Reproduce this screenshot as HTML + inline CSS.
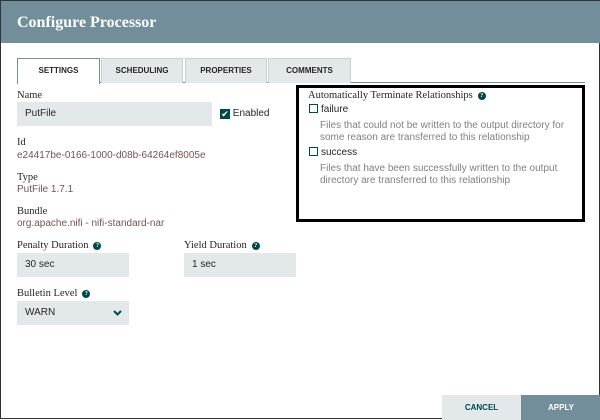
<!DOCTYPE html>
<html><head><style>
*{margin:0;padding:0;box-sizing:border-box}
body{width:600px;height:419px;background:#fff;font-family:"Liberation Sans",sans-serif;position:relative;overflow:hidden;border:1px solid #333}
.a{position:absolute}
.hdr{left:0;top:0;width:600px;height:42px;background:#728e9b;color:#fff;font-family:"Liberation Serif",serif;font-weight:bold;font-size:16px;padding:13px 0 0 16px}
.tab{top:57px;height:25px;background:#e3e8eb;border:1px solid #c7d2d7;border-bottom:none;font-size:8px;font-weight:bold;color:#262626;text-align:center;line-height:24px}
.lbl{font-family:"Liberation Serif",serif;font-size:10.5px;color:#262626}
.val{font-size:10px;color:#775351}
.inp{background:#e3e8eb;font-size:10px;color:#262626;padding-left:8px;line-height:24px;height:24px}
.q{display:inline-block;width:8px;height:8px;border-radius:50%;background:#004849;color:#fff;font-size:6px;line-height:8px;text-align:center;font-weight:bold;vertical-align:middle;margin-left:5px}
.cb{display:inline-block;width:9px;height:9px;border:1.5px solid #004849;vertical-align:-1px;margin-right:3px}
.desc{font-size:10px;color:#808080;line-height:12px}
</style></head><body>
<div class="a hdr">Configure Processor</div>
<div class="a" style="left:16px;top:81px;width:568px;height:1px;background:#728e9b"></div>
<div class="a tab" style="left:16px;width:83px;background:#fff;height:26px;border-color:#728e9b">SETTINGS</div>
<div class="a tab" style="left:100px;width:82px">SCHEDULING</div>
<div class="a tab" style="left:184px;width:82px">PROPERTIES</div>
<div class="a tab" style="left:267px;width:83px">COMMENTS</div>

<div class="a lbl" style="left:16px;top:89px">Name</div>
<div class="a inp" style="left:16px;top:101px;width:195px">PutFile</div>
<div class="a" style="left:219px;top:107px;font-size:10px;color:#262626"><span style="display:inline-block;width:10px;height:10px;background:#004849;color:#fff;font-size:9px;line-height:10px;text-align:center;vertical-align:-1px">✔</span> Enabled</div>
<div class="a lbl" style="left:16px;top:136px">Id</div>
<div class="a val" style="left:16px;top:149px">e24417be-0166-1000-d08b-64264ef8005e</div>
<div class="a lbl" style="left:16px;top:171px">Type</div>
<div class="a val" style="left:16px;top:183px">PutFile 1.7.1</div>
<div class="a lbl" style="left:16px;top:205px">Bundle</div>
<div class="a val" style="left:16px;top:217px">org.apache.nifi - nifi-standard-nar</div>
<div class="a lbl" style="left:16px;top:239px">Penalty Duration<span class="q">?</span></div>
<div class="a inp" style="left:16px;top:252px;width:112px">30 sec</div>
<div class="a lbl" style="left:183px;top:239px">Yield Duration<span class="q">?</span></div>
<div class="a inp" style="left:183px;top:252px;width:112px">1 sec</div>
<div class="a lbl" style="left:16px;top:287px">Bulletin Level<span class="q">?</span></div>
<div class="a inp" style="left:16px;top:300px;width:112px">WARN<svg class="a" style="left:96px;top:9px" width="9" height="6" viewBox="0 0 9 6"><path d="M1 1l3.5 3.5L8 1" stroke="#004849" stroke-width="2" fill="none"/></svg></div>

<div class="a" style="left:295px;top:84px;width:289px;height:137px;border:3px solid #000"></div>
<div class="a lbl" style="left:307px;top:89px">Automatically Terminate Relationships<span class="q">?</span></div>
<div class="a" style="left:308px;top:103px;font-size:10px;color:#262626"><span class="cb"></span>failure</div>
<div class="a desc" style="left:319px;top:119px">Files that could not be written to the output directory for<br>some reason are transferred to this relationship</div>
<div class="a" style="left:308px;top:146px;font-size:10px;color:#262626"><span class="cb"></span>success</div>
<div class="a desc" style="left:319px;top:162px">Files that have been successfully written to the output<br>directory are transferred to this relationship</div>

<div class="a" style="left:441px;top:394px;width:79px;height:25px;background:#e3e8eb;font-size:8px;font-weight:bold;color:#004849;text-align:center;line-height:25px">CANCEL</div>
<div class="a" style="left:520px;top:394px;width:80px;height:25px;background:#728e9b;font-size:8px;font-weight:bold;color:#fff;text-align:center;line-height:25px">APPLY</div>
</body></html>
